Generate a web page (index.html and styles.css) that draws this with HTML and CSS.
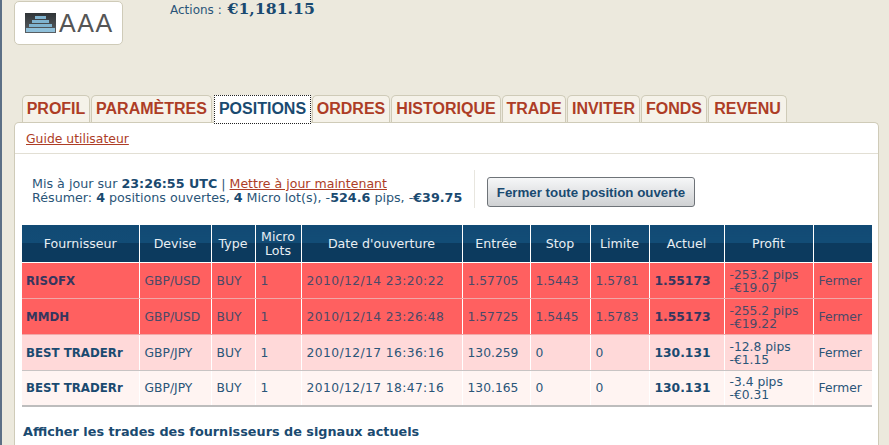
FILE: index.html
```html
<!DOCTYPE html>
<html lang="fr">
<head>
<meta charset="utf-8">
<title>Positions</title>
<link rel="stylesheet" href="styles.css">
</head>
<body>
<div class="page">
  <header class="top">
    <div class="logo">
      <svg class="logo-mark" width="31" height="20" viewBox="0 0 31 20">
        <defs>
          <linearGradient id="mark" x1="0" y1="0" x2="0" y2="1">
            <stop offset="0" stop-color="#2f3437"/>
            <stop offset="1" stop-color="#5a6064"/>
          </linearGradient>
        </defs>
        <rect width="31" height="20" fill="url(#mark)"/>
        <rect x="10" y="3" width="11" height="3" fill="#7fb3cf"/>
        <rect x="7" y="7" width="17" height="3" fill="#7fb3cf"/>
        <rect x="4" y="11" width="23" height="3" fill="#7fb3cf"/>
        <rect x="1" y="15" width="29" height="4" fill="#8fc0da"/>
      </svg>
      <span class="logo-text">AAA</span>
    </div>
    <div class="equity">Actions : <b>€1,181.15</b></div>
  </header>
  <nav class="tabs">
    <a class="tab t1">PROFIL</a>
    <a class="tab t2">PARAMÈTRES</a>
    <a class="tab t3 active">POSITIONS</a>
    <a class="tab t4">ORDRES</a>
    <a class="tab t5">HISTORIQUE</a>
    <a class="tab t6">TRADE</a>
    <a class="tab t7">INVITER</a>
    <a class="tab t8">FONDS</a>
    <a class="tab t9">REVENU</a>
  </nav>
  <main class="panel">
    <div class="guide"><a class="link">Guide utilisateur</a></div>
    <section class="summary">
      <p class="status">Mis à jour sur <b>23:26:55 UTC</b> | <a class="link now">Mettre à jour maintenant</a><br>Résumer: <b>4</b> positions ouvertes, <b>4</b> Micro lot(s), -<b>524.6</b> pips, -<b>€39.75</b></p>
      <div class="actions"><button class="close-all">Fermer toute position ouverte</button></div>
    </section>
    <table class="grid">
      <colgroup>
        <col class="c1"><col class="c2"><col class="c3"><col class="c4"><col class="c5"><col class="c6"><col class="c7"><col class="c8"><col class="c9"><col class="c10"><col class="c11">
      </colgroup>
      <thead>
        <tr><th>Fournisseur</th><th>Devise</th><th>Type</th><th>Micro<br>Lots</th><th>Date d'ouverture</th><th>Entrée</th><th>Stop</th><th>Limite</th><th>Actuel</th><th>Profit</th><th></th></tr>
      </thead>
      <tbody>
        <tr class="loss-high"><td class="name"><b>RISOFX</b></td><td>GBP/USD</td><td>BUY</td><td>1</td><td class="date">2010/12/14 23:20:22</td><td>1.57705</td><td>1.5443</td><td>1.5781</td><td><b>1.55173</b></td><td>-253.2 pips<br>-€19.07</td><td>Fermer</td></tr>
        <tr class="loss-high"><td class="name"><b>MMDH</b></td><td>GBP/USD</td><td>BUY</td><td>1</td><td class="date">2010/12/14 23:26:48</td><td>1.57725</td><td>1.5445</td><td>1.5783</td><td><b>1.55173</b></td><td>-255.2 pips<br>-€19.22</td><td>Fermer</td></tr>
        <tr class="loss-mid"><td class="name"><b>BEST TRADERr</b></td><td>GBP/JPY</td><td>BUY</td><td>1</td><td class="date">2010/12/17 16:36:16</td><td>130.259</td><td>0</td><td>0</td><td><b>130.131</b></td><td>-12.8 pips<br>-€1.15</td><td>Fermer</td></tr>
        <tr class="loss-low"><td class="name"><b>BEST TRADERr</b></td><td>GBP/JPY</td><td>BUY</td><td>1</td><td class="date">2010/12/17 18:47:16</td><td>130.165</td><td>0</td><td>0</td><td><b>130.131</b></td><td>-3.4 pips<br>-€0.31</td><td>Fermer</td></tr>
      </tbody>
    </table>
    <h2 class="signals">Afficher les trades des fournisseurs de signaux actuels</h2>
  </main>
</div>
</body>
</html>
```
FILE: styles.css
```css
html, body { margin: 0; padding: 0; height: 100%; overflow: hidden; }
body {
  background: #ece9dd;
  color: #1a4a70;
  font-family: "DejaVu Sans", Verdana, sans-serif;
  font-size: 12px;
}
.page { border-left: 2px solid #5c6f85; height: 445px; box-sizing: border-box; padding-left: 12px; padding-right: 10px; }
.top { display: flex; height: 95px; align-items: flex-start; }
.logo {
  margin-top: 1px; width: 109px; height: 44px; box-sizing: border-box;
  background: #fff; border: 1px solid #cfcbb8; border-radius: 5px;
  display: flex; align-items: center; padding-left: 10px; gap: 3px;
}
.logo-mark { filter: blur(0.4px); }
.logo-text { font-family: "Liberation Sans", Arial, sans-serif; font-size: 25px; color: #555; letter-spacing: 1.6px; }
.equity { margin-left: 47px; font-size: 12px; line-height: 18px; color: #2a5578; }
.equity b { font-family: "DejaVu Serif", Georgia, serif; font-size: 15.7px; color: #1a4a70; margin-left: 2px; }

.tabs { display: flex; height: 27px; padding-left: 8px; gap: 1px; position: relative; z-index: 1; }
.tab {
  box-sizing: border-box; height: 27px; padding-top: 3px; text-align: center;
  background: #f5f2e9; border: 1px solid #cfcbb8; border-bottom: 0; border-radius: 5px 5px 0 0;
  font-family: "Liberation Sans", Arial, sans-serif; font-weight: bold; font-size: 16px; line-height: 19px;
  color: #ad3d26;
}
.t1 { width: 68px; } .t2 { width: 121px; } .t3 { width: 97px; margin-left: 1px; } .t4 { width: 78px; } .t5 { width: 110px; }
.t6 { width: 64px; } .t7 { width: 73px; } .t8 { width: 66px; } .t9 { width: 79px; }
.tab.active { background: #fff; color: #1a4a70; border: 1px dotted #222; height: 29px; padding-top: 3px; border-radius: 0; }

.panel {
  width: 865px; height: 340px; box-sizing: border-box; background: #fff;
  border: 1px solid #cfcbb8; border-bottom: 0; border-radius: 5px 5px 0 0;
}
.guide { height: 30px; border-bottom: 1px solid #e2dfd4; padding-left: 11px; line-height: 32px; font-size: 12.4px; }
.link { color: #ad3d26; text-decoration: underline; }
.now { font-size: 12.55px; }
.summary { display: flex; height: 71px; padding-left: 17px; padding-top: 16px; box-sizing: border-box; }
.status { margin: 0; width: 443px; height: 38px; box-sizing: border-box; padding-top: 7px; font-size: 12.7px; line-height: 14px; border-right: 1px solid #e8e6df; white-space: nowrap; color: #2a5578; }
.status b { color: #1a4a70; }
.actions { padding-left: 12px; padding-top: 7px; }
.close-all {
  width: 208px; height: 30px; border: 1px solid #6e7378; border-radius: 3px;
  background: linear-gradient(#f6f7f8, #cfd1d3); padding: 0;
  font-family: "Liberation Sans", Arial, sans-serif; font-weight: bold; font-size: 13.3px; color: #1a4a70;
}
.grid { border-collapse: collapse; table-layout: fixed; width: 850px; margin-left: 7px; border-bottom: 2px solid #bdbdbd; }
.c1 { width: 117px; } .c2 { width: 72px; } .c3 { width: 44px; } .c4 { width: 46px; } .c5 { width: 161px; }
.c6 { width: 68px; } .c7 { width: 60px; } .c8 { width: 59px; } .c9 { width: 75px; } .c10 { width: 89px; } .c11 { width: 59px; }
.grid th {
  height: 37px; padding: 0; border-right: 1px solid #fff; border-bottom: 1px solid #fff;
  background: linear-gradient(#114a74 0, #124c76 48%, #0c3a5e 50%, #0c3a5e 100%);
  color: #e8eef3; font-weight: normal; font-size: 12.6px; line-height: 14px; text-align: center;
}
.grid th:last-child { border-right: 0; }
.grid td {
  height: 36px; box-sizing: border-box; padding: 2px 0 0 5px; font-size: 12.3px; line-height: 13px; white-space: nowrap;
  border-right: 1px solid #fff; border-bottom: 1px solid #c8c4c4; color: #2a5578;
}
.grid td:last-child { border-right: 0; }
.grid td b { color: #1a4a70; }
.grid td.name { padding-left: 4px; }
.grid td.name b { font-size: 11.8px; }
.grid td.date { letter-spacing: 0.4px; }
.grid .loss-high td { background: #ff6060; color: #4a4a68; border-bottom-color: #f0a8a8; }
.grid .loss-high td b { color: #36365e; }
.loss-mid td { background: #ffd9d9; }
.grid .loss-low td { height: 35px; background: #fff4f2; border-bottom: 0; }
.signals { margin: 17px 0 0 8px; font-size: 12.8px; line-height: 16px; font-weight: bold; color: #1a4a70; }
```
